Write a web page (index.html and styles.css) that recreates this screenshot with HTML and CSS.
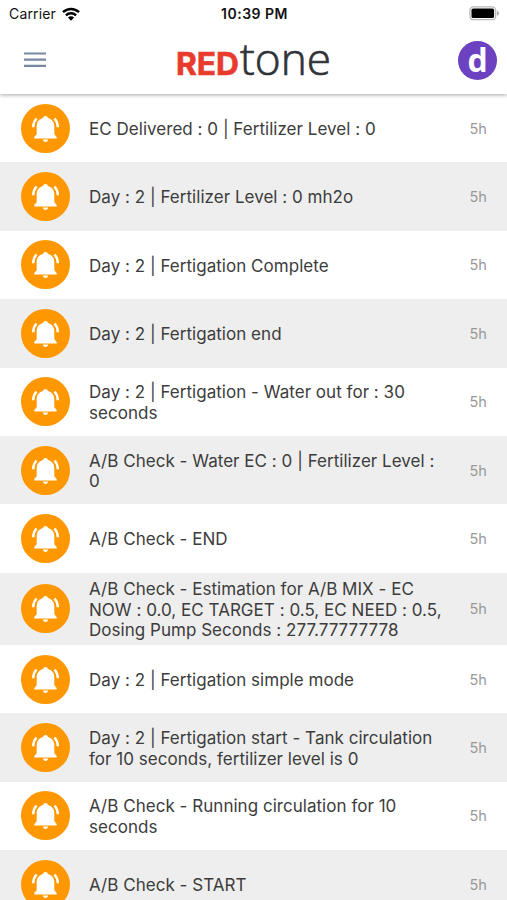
FILE: index.html
```
<!DOCTYPE html>
<html lang="en">
<head>
<meta charset="utf-8">
<meta name="viewport" content="width=device-width, initial-scale=1">
<title>REDtone notifications</title>
<link rel="stylesheet" href="styles.css">
</head>
<body>
<svg width="0" height="0" class="defs">
  <symbol id="bell" viewBox="0 0 49 49">
    <path fill="#fff" d="M24.500 12c1.300 0 2.200.8 2.500 1.900 4 1 6.300 4.100 6.300 8.100v8.200l2.400 2.700v1.700H13.300v-1.700l2.400-2.700V22c0-4 2.300-7.100 6.300-8.100.3-1.100 1.200-1.900 2.500-1.900zM22 35.500h5c0 1.400-1.100 2.400-2.500 2.400S22 36.900 22 35.500z"/>
    <path fill="none" stroke="#fff" stroke-width="2.500" d="M15.500 14.500c-2.100 2.200-3.200 5.200-3.300 8.800M33.500 14.500c2.100 2.200 3.200 5.200 3.300 8.800"/>
  </symbol>
</svg>
<header class="header">
  <div class="status">
    <div class="carrier">Carrier
      <svg width="18" height="14" viewBox="0 0 18 14" fill="none" stroke="#000" stroke-width="2.500"><path d="M1 5.200c4.500-4.300 11.500-4.300 16 0M3.900 8.400c2.900-2.800 7.300-2.800 10.200 0"/><path fill="#000" stroke="none" d="M5.900 10.600c1.800-1.700 4.400-1.700 6.200 0L9 13.700z"/></svg>
    </div>
    <div class="time">10:39 PM</div>
    <svg class="battery" width="31" height="15" viewBox="0 0 31 15"><rect x=".9" y=".9" width="25.800" height="12.800" rx="3.500" fill="#fff" stroke="#b9b9b9" stroke-width="1.300"/><rect x="2.500" y="2.500" width="22.600" height="9.600" rx="1.700"/><path fill="#aaa" d="M28 5c2.600.8 2.600 3.800 0 4.600z"/></svg>
  </div>
  <div class="bar">
    <svg class="menu" width="24" height="18" viewBox="0 0 24 18" stroke="#7788a4" stroke-width="2.200"><path d="M1 2.500h22M1 8.700h22M1 14.900h22"/></svg>
    <svg class="logo" width="160" height="66" viewBox="0 0 160 66">
      <text class="logo-red" x="2" y="47.500" textLength="63" lengthAdjust="spacingAndGlyphs">RED</text>
      <text class="logo-tone" x="66" y="47.500" textLength="91" lengthAdjust="spacingAndGlyphs">tone</text>
    </svg>
    <div class="avatar">d</div>
  </div>
</header>
<main class="list">
  <div class="row"><svg class="icon"><use href="#bell"/></svg><p class="text">EC Delivered : 0 | Fertilizer Level : 0</p><span class="age">5h</span></div>
  <div class="row"><svg class="icon"><use href="#bell"/></svg><p class="text">Day : 2 | Fertilizer Level : 0 mh2o</p><span class="age">5h</span></div>
  <div class="row"><svg class="icon"><use href="#bell"/></svg><p class="text">Day : 2 | Fertigation Complete</p><span class="age">5h</span></div>
  <div class="row"><svg class="icon"><use href="#bell"/></svg><p class="text">Day : 2 | Fertigation end</p><span class="age">5h</span></div>
  <div class="row"><svg class="icon"><use href="#bell"/></svg><p class="text">Day : 2 | Fertigation - Water out for : 30<br>seconds</p><span class="age">5h</span></div>
  <div class="row"><svg class="icon"><use href="#bell"/></svg><p class="text">A/B Check - Water EC : 0 | Fertilizer Level :<br>0</p><span class="age">5h</span></div>
  <div class="row"><svg class="icon"><use href="#bell"/></svg><p class="text">A/B Check - END</p><span class="age">5h</span></div>
  <div class="row"><svg class="icon"><use href="#bell"/></svg><p class="text">A/B Check - Estimation for A/B MIX - EC<br>NOW : 0.0, EC TARGET : 0.5, EC NEED : 0.5,<br>Dosing Pump Seconds : 277.77777778</p><span class="age">5h</span></div>
  <div class="row"><svg class="icon"><use href="#bell"/></svg><p class="text">Day : 2 | Fertigation simple mode</p><span class="age">5h</span></div>
  <div class="row"><svg class="icon"><use href="#bell"/></svg><p class="text">Day : 2 | Fertigation start - Tank circulation<br>for 10 seconds, fertilizer level is 0</p><span class="age">5h</span></div>
  <div class="row"><svg class="icon"><use href="#bell"/></svg><p class="text">A/B Check - Running circulation for 10<br>seconds</p><span class="age">5h</span></div>
  <div class="row"><svg class="icon"><use href="#bell"/></svg><p class="text">A/B Check - START</p><span class="age">5h</span></div>
</main>
</body>
</html>
```
FILE: styles.css
```
* { box-sizing: border-box; }
body {
  margin: 0;
  height: 900px;
  overflow: hidden;
  background: #fff;
  color: #3c3c3c;
  font-family: Inter, "Liberation Sans", sans-serif;
}
.defs { position: absolute; }
.header {
  position: relative;
  height: 94px;
  background: #fff;
  box-shadow: 0 1px 4px rgba(0, 0, 0, .35);
}
.status {
  display: grid;
  grid-template-columns: 1fr auto 1fr;
  align-items: center;
  height: 27px;
  padding: 0 7px 0 9px;
  color: #111;
}
.carrier { display: flex; align-items: center; gap: 6px; font-size: 14px; letter-spacing: .15px; }
.time { font-size: 14px; font-weight: 600; letter-spacing: .5px; }
.battery { justify-self: end; }
.bar {
  display: grid;
  grid-template-columns: 1fr auto 1fr;
  align-items: center;
  height: 66px;
  padding: 0 10px 0 23px;
}
.logo { margin-right: 20px; margin-left: 7px; overflow: visible; }
.logo-red { font: 700 31px Inter, sans-serif; fill: #e93a2e; stroke: #e93a2e; stroke-width: .6px; }
.logo-tone { font: 300 45px "Open Sans", sans-serif; fill: #303338; stroke: #303338; stroke-width: .7px; }
.avatar {
  display: flex;
  align-items: center;
  justify-content: center;
  justify-self: end;
  width: 39px;
  height: 39px;
  border-radius: 50%;
  background: #6c42c1;
  color: #fff;
  font: 700 32px/1 "Open Sans", sans-serif;
}
.row {
  display: flex;
  align-items: center;
  min-height: 68.4px;
  padding: 5px 20px 5px 20.500px;
}
.row:nth-child(even) { background: #eee; }
.icon { flex: none; width: 49px; height: 49px; border-radius: 50%; background: #ff9800; }
.text {
  flex: 1;
  margin: 1.200px 0 -1.200px 19.500px;
  font-size: 17px;
  line-height: 20.700px;
  letter-spacing: .03px;
  white-space: nowrap;
}
.age { color: #999; font-size: 14.500px; letter-spacing: .1px; }
```
